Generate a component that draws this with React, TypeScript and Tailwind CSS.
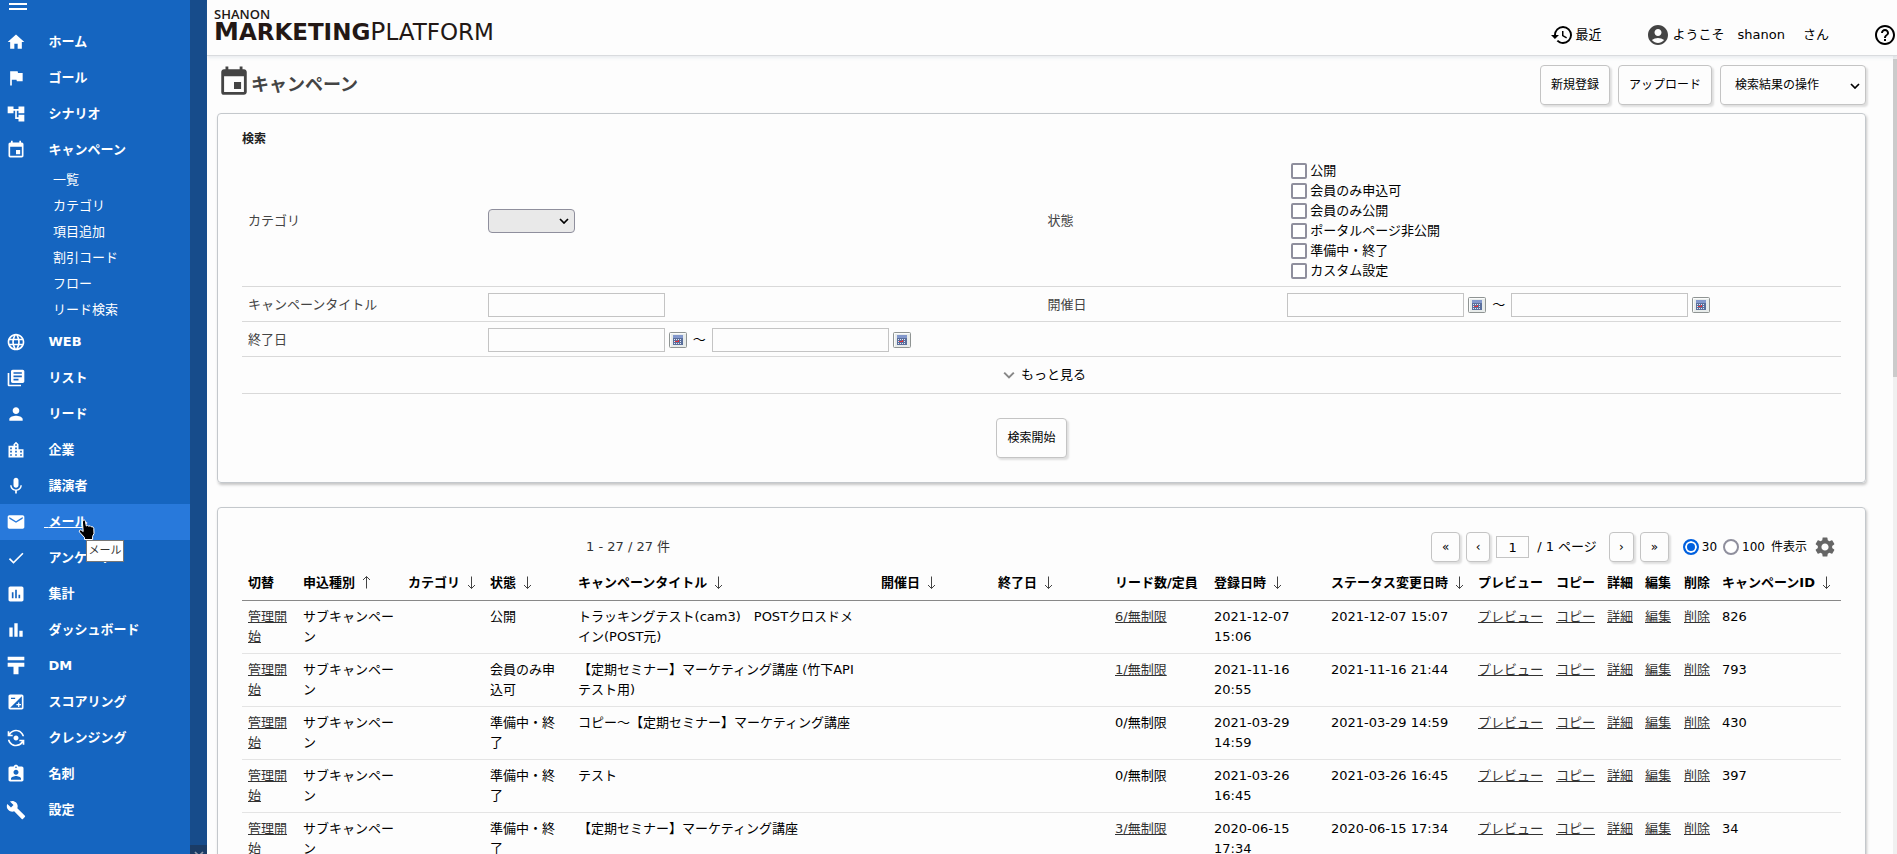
import React, { useState } from 'react';
import type { IconType } from 'react-icons';
import {
  MdAccountCircle,
  MdAccountTree,
  MdAssessment,
  MdAssignmentInd,
  MdBarChart,
  MdBuild,
  MdCheck,
  MdEmail,
  MdEvent,
  MdExposure,
  MdFlag,
  MdFlipCameraAndroid,
  MdHelpOutline,
  MdHistory,
  MdHome,
  MdLanguage,
  MdLibraryBooks,
  MdLocationCity,
  MdMenu,
  MdMic,
  MdPerson,
  MdSettings,
} from 'react-icons/md';

const PostMark = () => (
  <svg viewBox="0 0 24 24" className="h-5 w-5" fill="currentColor" aria-hidden="true">
    <path d="M2 1h20v4H2zM2 8h20v5h-7v9H9v-9H2z" />
  </svg>
);

interface NavEntry {
  label: string;
  icon: IconType | React.FC;
  children?: string[];
  active?: boolean;
}

const navItems: NavEntry[] = [
  { label: 'ホーム', icon: MdHome },
  { label: 'ゴール', icon: MdFlag },
  { label: 'シナリオ', icon: MdAccountTree },
  {
    label: 'キャンペーン',
    icon: MdEvent,
    children: ['一覧', 'カテゴリ', '項目追加', '割引コード', 'フロー', 'リード検索'],
  },
  { label: 'WEB', icon: MdLanguage },
  { label: 'リスト', icon: MdLibraryBooks },
  { label: 'リード', icon: MdPerson },
  { label: '企業', icon: MdLocationCity },
  { label: '講演者', icon: MdMic },
  { label: 'メール', icon: MdEmail, active: true },
  { label: 'アンケート', icon: MdCheck },
  { label: '集計', icon: MdAssessment },
  { label: 'ダッシュボード', icon: MdBarChart },
  { label: 'DM', icon: PostMark },
  { label: 'スコアリング', icon: MdExposure },
  { label: 'クレンジング', icon: MdFlipCameraAndroid },
  { label: '名刺', icon: MdAssignmentInd },
  { label: '設定', icon: MdBuild },
];

const statuses = [
  '公開',
  '会員のみ申込可',
  '会員のみ公開',
  'ポータルページ非公開',
  '準備中・終了',
  'カスタム設定',
];

type Sort = 'up' | 'down';

const columns: { label: string; width: string; sort?: Sort }[] = [
  { label: '切替', width: 'w-[55px]' },
  { label: '申込種別', width: 'w-[105px]', sort: 'up' },
  { label: 'カテゴリ', width: 'w-[82px]', sort: 'down' },
  { label: '状態', width: 'w-[88px]', sort: 'down' },
  { label: 'キャンペーンタイトル', width: '', sort: 'down' },
  { label: '開催日', width: 'w-[117px]', sort: 'down' },
  { label: '終了日', width: 'w-[117px]', sort: 'down' },
  { label: 'リード数/定員', width: 'w-[99px]' },
  { label: '登録日時', width: 'w-[117px]', sort: 'down' },
  { label: 'ステータス変更日時', width: 'w-[147px]', sort: 'down' },
  { label: 'プレビュー', width: 'w-[78px]' },
  { label: 'コピー', width: 'w-[51px]' },
  { label: '詳細', width: 'w-[38px]' },
  { label: '編集', width: 'w-[39px]' },
  { label: '削除', width: 'w-[38px]' },
  { label: 'キャンペーンID', width: 'w-[125px]', sort: 'down' },
];

const campaigns = [
  { id: '826', status: '公開', title: 'トラッキングテスト(cam3)　POSTクロスドメイン(POST元)', leads: 6, created: '2021-12-07 15:06', changed: '2021-12-07 15:07' },
  { id: '793', status: '会員のみ申込可', title: '【定期セミナー】マーケティング講座 (竹下APIテスト用)', leads: 1, created: '2021-11-16 20:55', changed: '2021-11-16 21:44' },
  { id: '430', status: '準備中・終了', title: 'コピー～【定期セミナー】マーケティング講座', leads: 0, created: '2021-03-29 14:59', changed: '2021-03-29 14:59' },
  { id: '397', status: '準備中・終了', title: 'テスト', leads: 0, created: '2021-03-26 16:45', changed: '2021-03-26 16:45' },
  { id: '34', status: '準備中・終了', title: '【定期セミナー】マーケティング講座', leads: 3, created: '2020-06-15 17:34', changed: '2020-06-15 17:34' },
];

const rowActions = ['プレビュー', 'コピー', '詳細', '編集', '削除'];

const raised =
  'rounded border border-[#c4c4c4] bg-[#fdfdfd] text-xs text-black shadow-[2px_2px_2px_rgba(0,0,0,0.12)]';

const Chevron: React.FC<{ className?: string }> = ({ className }) => (
  <svg viewBox="0 0 10 6" className={className} fill="none" stroke="currentColor" strokeWidth="1.7" aria-hidden="true">
    <path d="M1 1l4 4 4-4" />
  </svg>
);

const SortArrow: React.FC<{ direction: Sort }> = ({ direction }) => (
  <svg viewBox="0 0 9 13" className="h-[13px] w-[9px] text-[#444]" fill="none" stroke="currentColor" aria-hidden="true">
    <path d={direction === 'down' ? 'M4.5 0.5v12M1 9l3.5 3.5L8 9' : 'M4.5 12.5V0.5M1 4l3.5-3.5L8 4'} />
  </svg>
);

const CalendarButton: React.FC<{ label: string }> = ({ label }) => (
  <button type="button" aria-label={label} className="ml-1 block h-4 w-[18px]">
    <svg viewBox="0 0 18 16" className="h-4 w-[18px]">
      <rect x="0.5" y="0.5" width="17" height="15" rx="1" fill="#e8eceb" stroke="#8f9493" />
      <path d="M1.5 14.5V1.5h15" fill="none" stroke="#fbfcfc" />
      <rect x="4" y="3" width="10" height="10" fill="#5a6f9c" />
      <rect x="4" y="3" width="10" height="3" fill="#8398cc" />
      <path d="M5 7.5h8M5 9.5h8M5 11.5h8" stroke="#e3e8f4" strokeDasharray="1 1" />
      <path d="M6 9.5h4M9.500 8v2" stroke="#e0333c" />
    </svg>
  </button>
);

const textBox = 'h-6 w-[177px] border border-[#c4c4c4] bg-[#fdfdfd] px-1 text-[13px]';

const DateRange: React.FC<{ name: string; label: string }> = ({ name, label }) => (
  <div className="flex items-center">
    <input id={name} type="text" className={textBox} />
    <CalendarButton label={`${label}（開始）`} />
    <span className="mx-1.5 w-[13px]">～</span>
    <input type="text" aria-label={`${label}（終了）`} className={textBox} />
    <CalendarButton label={`${label}（終了）`} />
  </div>
);

// Hand pointer and its tooltip, floating over the hovered entry
const HoverHint = () => (
  <>
    <svg viewBox="0 0 17 22" className="absolute top-[15px] left-[78px] z-20 h-[22px] w-[17px]" aria-hidden="true">
      <path
        d="M5 1.5c1-.9 2.200-.4 2.400.7L8.300 7l1.200-.6 1.300.8 1.400-.4 1 1 1.500-.1 1.100 1.800.2 5-1.400 2.800V20.500H6.500v-2L1.500 13c-.8-1.300.4-2.500 1.700-1.900l2 1.400L4.400 3z"
        fill="#000"
        stroke="#fff"
      />
    </svg>
    <span
      role="tooltip"
      className="absolute top-9 left-[86px] z-10 flex h-[22px] w-[38px] items-center justify-center border border-[#767676] bg-white text-[11px] whitespace-nowrap text-[#333]"
    >
      メール
    </span>
  </>
);

const Sidebar = () => (
  <aside className="flex h-full w-[207px] shrink-0 bg-[#1565c0] text-white">
    <nav className="min-w-0 flex-1">
      <div className="flex h-6 items-start pl-1.5">
        <button type="button" aria-label="メニュー" className="-mt-2 block">
          <MdMenu className="h-6 w-6" />
        </button>
      </div>
      <ul>
        {navItems.map(({ label, icon: Icon, children, active }) => (
          <li key={label} className="relative">
            <a
              href="#"
              className={`flex h-9 items-center pl-1.5 font-bold ${active ? 'bg-[#2879db] underline' : ''}`}
            >
              <span className="w-[38px]">
                <Icon className="h-5 w-5" />
              </span>
              {'\u00a0'}
              {label}
            </a>
            {active && <HoverHint />}
            {children && (
              <ul>
                {children.map((child) => (
                  <li key={child} className="h-[26px] pl-[53px] leading-6">
                    <a href="#">{child}</a>
                  </li>
                ))}
              </ul>
            )}
          </li>
        ))}
      </ul>
    </nav>
    <div className="flex w-[17px] flex-col justify-end bg-[#174c8b]">
      <div className="flex h-[9px] justify-center overflow-hidden bg-[#1b3c66] pt-1.5 text-[#8d9bad]">
        <Chevron className="h-1.5 w-2.5 shrink-0" />
      </div>
    </div>
  </aside>
);

const Header = () => (
  <header className="relative z-10 flex h-14 shrink-0 items-start justify-between border-b border-[#d9dbde] pl-[7px] shadow-[0_2px_3px_rgba(120,140,170,0.15)]">
    <a href="#" className="block pt-2 text-[#231815]">
      <span className="block font-['Open_Sans',sans-serif] text-[13px] leading-3 font-semibold">SHANON</span>
      <span className="flex items-baseline text-[23px] leading-6">
        <span className="font-bold">
          <span className="text-[25px] leading-6">M</span>ARKETING
        </span>
        <span>
          <span className="text-[25px] leading-6">P</span>LATFORM
        </span>
      </span>
    </a>
    <div className="flex items-center pt-[23px]">
      <a href="#" className="flex items-center gap-0.5">
        <MdHistory className="h-6 w-6" />
        最近
      </a>
      <a href="#" className="ml-11 flex items-center gap-[3px]">
        <MdAccountCircle className="h-6 w-6 text-[#444]" />
        ようこそ　shanon
      </a>
      <span className="ml-[18px]">さん</span>
      <a href="#" aria-label="ヘルプ" className="ml-11">
        <MdHelpOutline className="h-6 w-6" />
      </a>
    </div>
  </header>
);

const SearchPanel = () => (
  <section className="rounded border border-[#c4c8cc] px-6 pt-[15px] pb-6 shadow-[1px_2px_3px_rgba(0,0,0,0.22)]">
    <h2 className="text-xs leading-5 font-bold text-[#222]">検索</h2>
    <form className="mt-3">
      <div className="grid grid-cols-[15fr_35fr_15fr_35fr] items-center border-b border-[#d9d9d9] pb-[5px]">
        <label htmlFor="category" className="pl-1.5 text-[#444]">
          カテゴリ
        </label>
        <div className="pl-1.5">
          <span className="relative inline-block align-middle">
            <select id="category" className="block h-6 w-[87px] appearance-none rounded border border-[#8f8f9d] bg-[#e9e9e9]">
              <option></option>
            </select>
            <Chevron className="pointer-events-none absolute top-[9px] right-1.5 h-1.5 w-2.5" />
          </span>
        </div>
        <span className="pl-1.5 text-[#444]">状態</span>
        <div className="flex flex-col pl-2.5">
          {statuses.map((status) => (
            <label key={status} className="flex h-5 items-center gap-[3px]">
              <input
                type="checkbox"
                className="h-4 w-4 appearance-none rounded-[2px] border-2 border-[#8f8f9d] bg-white checked:bg-[#0060df]"
              />
              {status}
            </label>
          ))}
        </div>
      </div>
      <div className="grid h-[35px] grid-cols-[15fr_35fr_15fr_35fr] items-center border-b border-[#d9d9d9] pt-0.5">
        <label htmlFor="title" className="pl-1.5 text-[#444]">
          キャンペーンタイトル
        </label>
        <div className="pl-1.5">
          <input id="title" type="text" className={`${textBox} block`} />
        </div>
        <label htmlFor="held" className="pl-1.5 text-[#444]">
          開催日
        </label>
        <div className="pl-1.5">
          <DateRange name="held" label="開催日" />
        </div>
      </div>
      <div className="grid h-[35px] grid-cols-[15fr_85fr] items-center border-b border-[#d9d9d9] pt-0.5">
        <label htmlFor="ended" className="pl-1.5 text-[#444]">
          終了日
        </label>
        <div className="pl-1.5">
          <DateRange name="ended" label="終了日" />
        </div>
      </div>
      <div className="flex h-[37px] items-center justify-center border-b border-[#d9d9d9]">
        <button type="button" className="ml-1.5 flex items-center gap-1.5">
          <Chevron className="h-2 w-3 text-[#888]" />
          もっと見る
        </button>
      </div>
      <div className="flex justify-center pt-6 pr-5">
        <button type="submit" className={`${raised} h-10 px-2.5`}>
          検索開始
        </button>
      </div>
    </form>
  </section>
);

const Pager = () => {
  const [perPage, setPerPage] = useState(30);

  return (
    <div className="flex items-center">
      <button type="button" aria-label="最初" className={`${raised} h-[30px] w-[29px] text-sm`}>
        «
      </button>
      <button type="button" aria-label="前へ" className={`${raised} ml-1.5 h-[30px] w-6 text-sm`}>
        ‹
      </button>
      <input
        type="text"
        aria-label="ページ"
        defaultValue="1"
        className="ml-1.5 h-[22px] w-[33px] border border-[#c4c4c4] bg-[#fdfdfd] text-center"
      />
      <span className="ml-2">/ 1 ページ</span>
      <button type="button" aria-label="次へ" className={`${raised} ml-3 h-[30px] w-[25px] text-sm`}>
        ›
      </button>
      <button type="button" aria-label="最後" className={`${raised} ml-1.5 h-[30px] w-[29px] text-sm`}>
        »
      </button>
      <div className="ml-3.5 flex items-center text-xs">
        {[30, 100].map((count) => (
          <label key={count} className="mr-1.5 flex items-center gap-[3px]">
            <input
              type="radio"
              name="perPage"
              checked={perPage === count}
              onChange={() => setPerPage(count)}
              className="h-4 w-4 appearance-none rounded-full border-2 border-[#8f8f9d] bg-white checked:border-[#0060df] checked:bg-[#0060df] checked:shadow-[inset_0_0_0_2px_#fff]"
            />
            {count}
          </label>
        ))}
        <span>件表示</span>
      </div>
      <button type="button" aria-label="表示設定" className="ml-1.5">
        <MdSettings className="h-6 w-6 text-[#666]" />
      </button>
    </div>
  );
};

const ResultPanel = () => (
  <section className="rounded border border-[#c4c8cc] px-6 pt-6 shadow-[1px_2px_3px_rgba(0,0,0,0.22)]">
    <div className="flex h-[30px] items-center justify-between pr-1">
      <p className="pl-[344px] text-[#333]">1 - 27 / 27 件</p>
      <Pager />
    </div>
    <table className="mt-1 w-full table-fixed border-collapse text-left leading-5">
      <thead>
        <tr className="border-b border-[#888]">
          {columns.map(({ label, width, sort }) => (
            <th key={label} scope="col" className={`${width} h-[34px] p-0 pl-1.5 font-bold whitespace-nowrap`}>
              <span className="inline-flex items-center gap-[7px]">
                {label}
                {sort && <SortArrow direction={sort} />}
              </span>
            </th>
          ))}
        </tr>
      </thead>
      <tbody>
        {campaigns.map((campaign) => (
          <tr key={campaign.id} className="border-b border-[#e4e4e4] align-top">
            <td className="px-1.5 py-1.5">
              <a href="#" className="text-[#333] underline">
                管理開始
              </a>
            </td>
            <td className="px-1.5 py-1.5">サブキャンペーン</td>
            <td className="px-1.5 py-1.5"></td>
            <td className="px-1.5 py-1.5">{campaign.status}</td>
            <td className="py-1.5 pr-3 pl-1.5">{campaign.title}</td>
            <td className="px-1.5 py-1.5"></td>
            <td className="px-1.5 py-1.5"></td>
            <td className="px-1.5 py-1.5">
              {campaign.leads > 0 ? (
                <a href="#" className="text-[#333] underline">
                  {campaign.leads}/無制限
                </a>
              ) : (
                <>{campaign.leads}/無制限</>
              )}
            </td>
            <td className="px-1.5 py-1.5">{campaign.created}</td>
            <td className="px-1.5 py-1.5">{campaign.changed}</td>
            {rowActions.map((action) => (
              <td key={action} className="py-1.5 pl-1.5 whitespace-nowrap">
                <a href="#" className="text-[#333] underline">
                  {action}
                </a>
              </td>
            ))}
            <td className="px-1.5 py-1.5">{campaign.id}</td>
          </tr>
        ))}
      </tbody>
    </table>
  </section>
);

const App: React.FC = () => {
  return (
    <div className="flex h-screen overflow-hidden bg-[#fdfdfd] font-['DejaVu_Sans','Noto_Sans_CJK_JP',sans-serif] text-[13px] leading-5 text-black">
      <Sidebar />
      <div className="flex min-w-0 flex-1 flex-col">
        <Header />
        <div className="flex min-h-0 flex-1">
          <main className="min-w-0 flex-1 overflow-hidden pt-[9px] pr-[27px] pl-2.5">
            <div className="flex h-12 items-start justify-between">
              <h1 className="flex items-end text-lg font-bold text-[#444]">
                <MdEvent className="h-[34px] w-[34px]" />
                キャンペーン
              </h1>
              <div className="flex gap-2">
                <button type="button" className={`${raised} h-10 px-2.5`}>
                  新規登録
                </button>
                <button type="button" className={`${raised} h-10 px-2.5`}>
                  アップロード
                </button>
                <span className="relative">
                  <select
                    aria-label="検索結果の操作"
                    className={`${raised} block h-10 w-[146px] appearance-none pl-3.5`}
                  >
                    <option>検索結果の操作</option>
                  </select>
                  <Chevron className="pointer-events-none absolute top-[18px] right-1.5 h-1.5 w-2.5" />
                </span>
              </div>
            </div>
            <div className="flex flex-col gap-6">
              <SearchPanel />
              <ResultPanel />
            </div>
          </main>
          <div className="w-1 bg-[#f0f0f0] pt-[3px]">
            <div className="h-[40%] bg-[#cbcbcb]" />
          </div>
        </div>
      </div>
    </div>
  );
};

export default App;
